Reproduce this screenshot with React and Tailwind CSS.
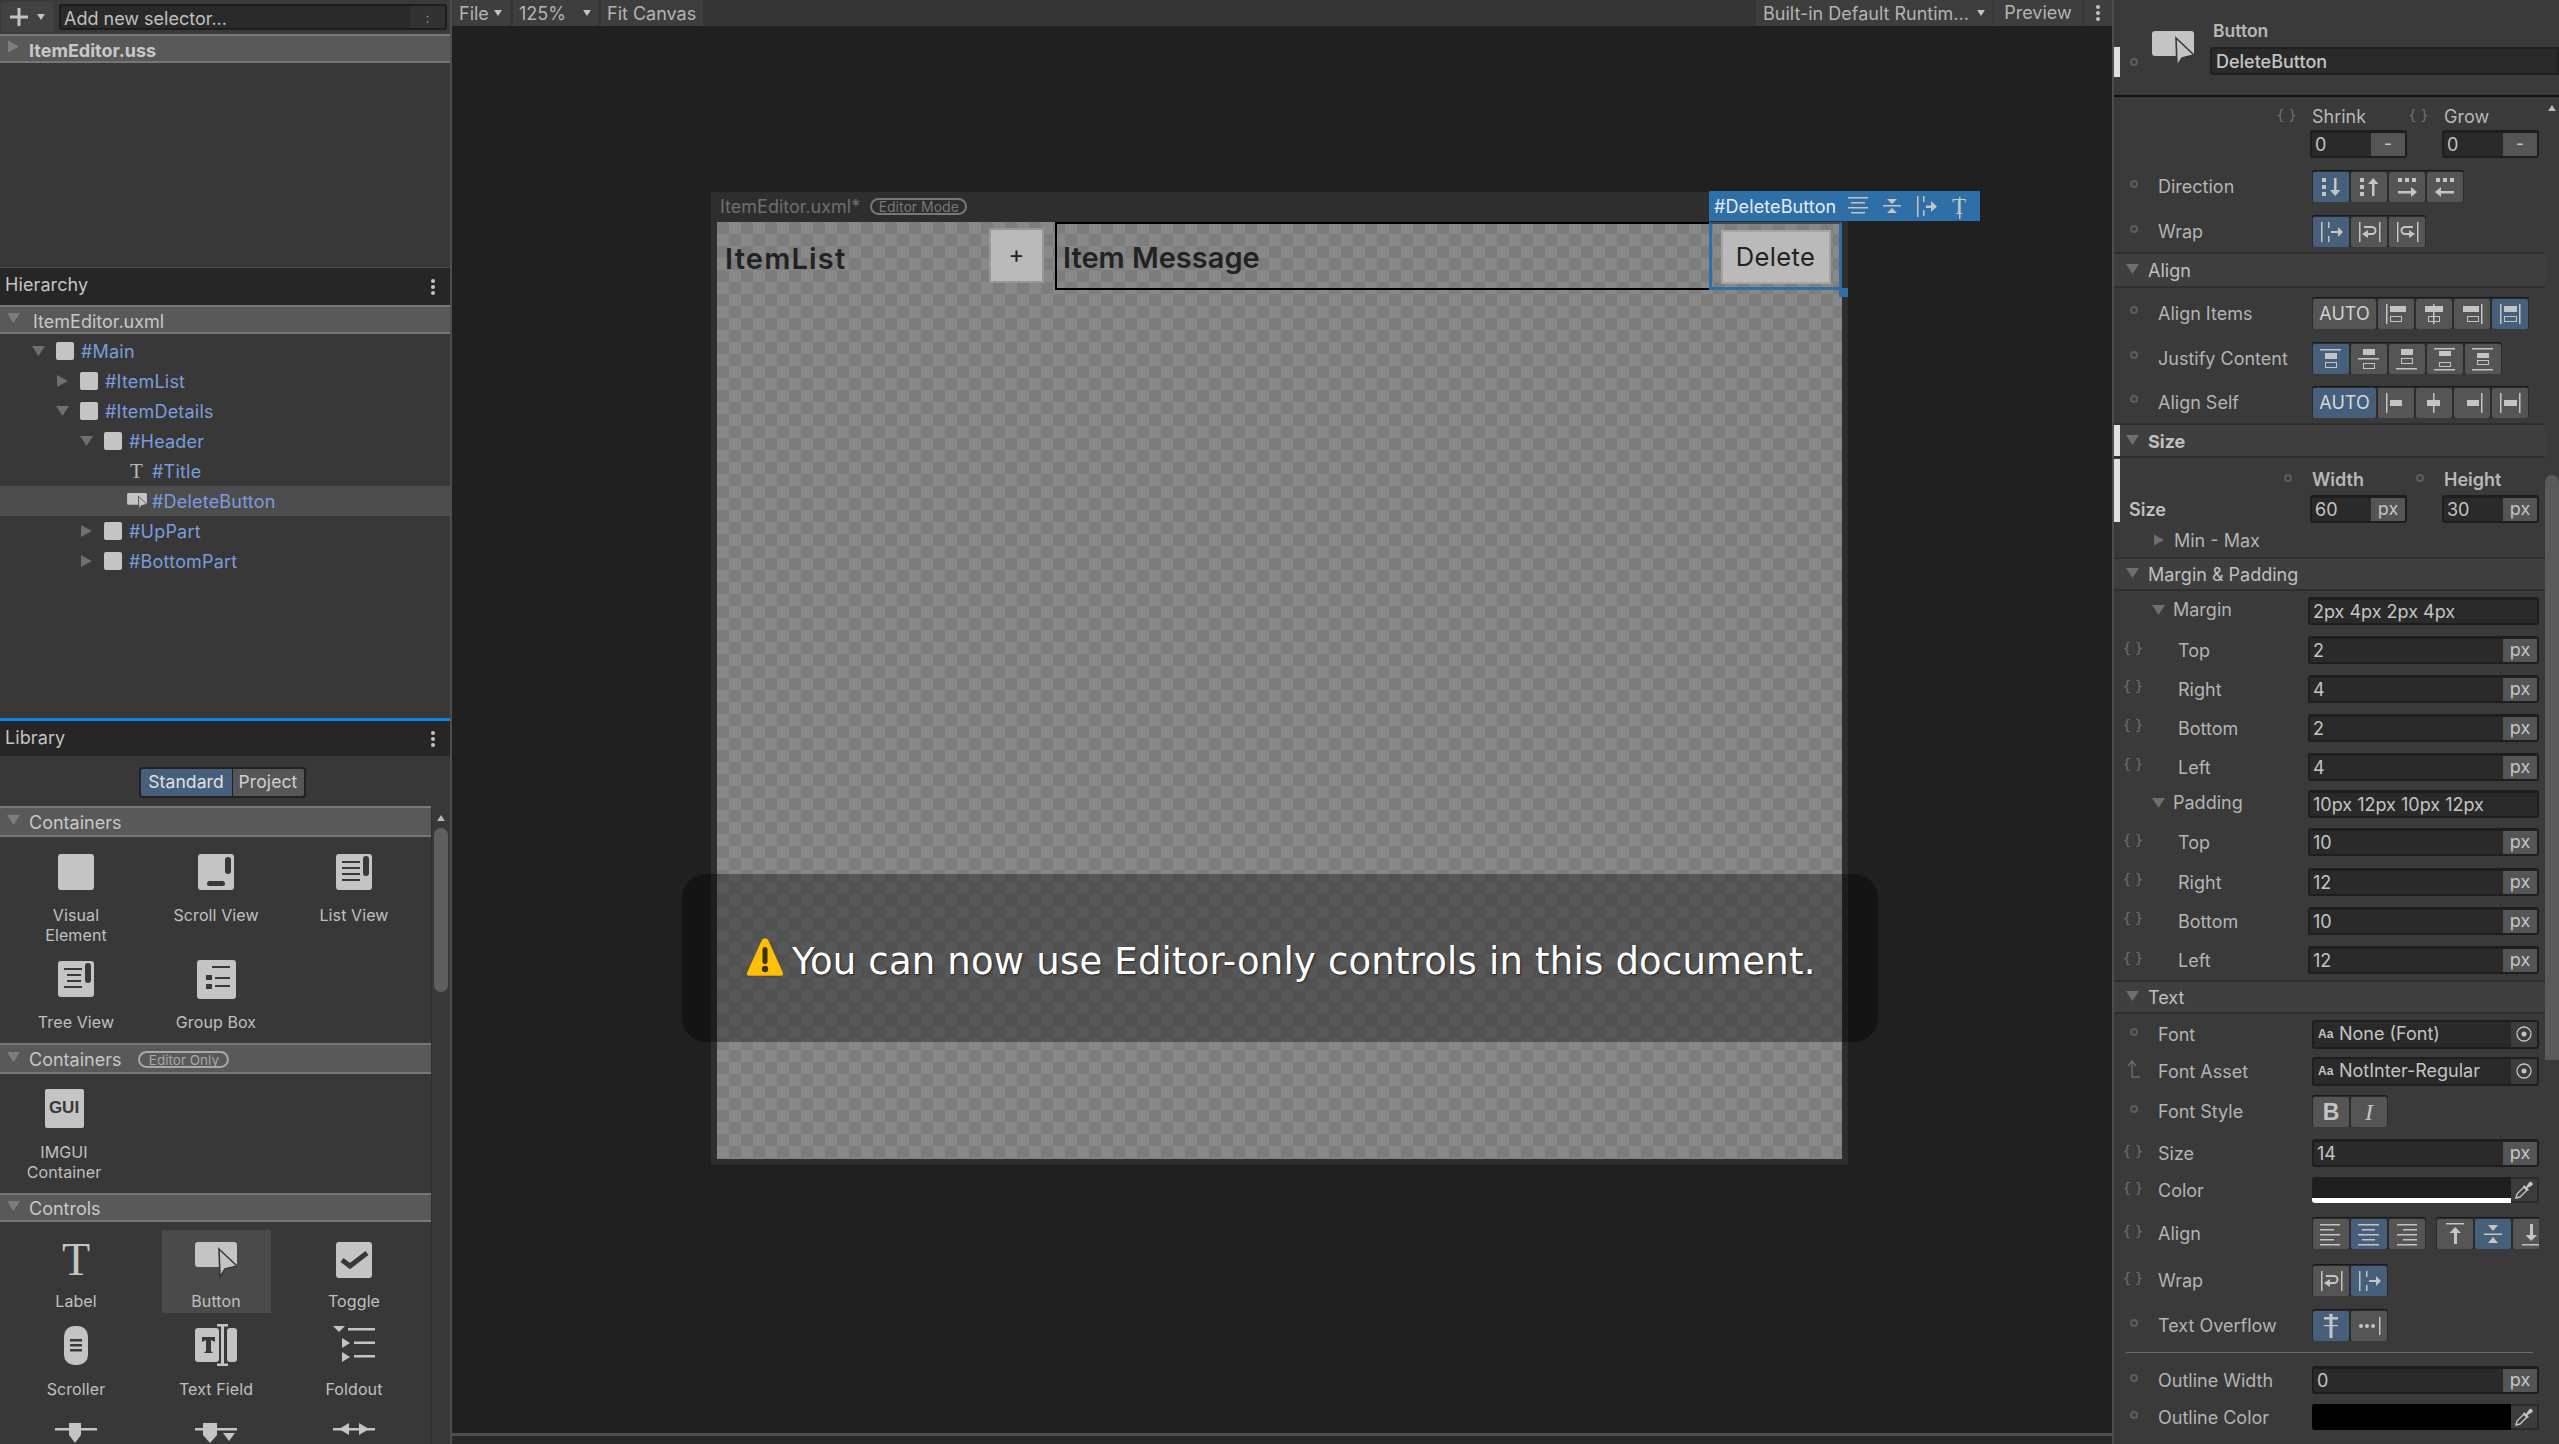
import React from 'react';

const ICON = '#c4c4c4';
const DARK = '#383838';

function Tri({ dir = 'down', className = 'w-[13px] h-[10px]', color = '#6f6f6f' }) {
  const points = dir === 'down' ? '0,0 13,0 6.5,10' : '1,0 12,6 1,12';
  return (
    <svg viewBox={dir === 'down' ? '0 0 13 10' : '0 0 13 12'} className={`${className} shrink-0`}>
      <polygon points={points} fill={color} />
    </svg>
  );
}

function Kebab({ className = '' }) {
  return (
    <svg viewBox="0 0 6 16" className={`w-[6px] h-[16px] shrink-0 ${className}`}>
      <circle cx="3" cy="2" r="2" fill="#c4c4c4" />
      <circle cx="3" cy="8" r="2" fill="#c4c4c4" />
      <circle cx="3" cy="14" r="2" fill="#c4c4c4" />
    </svg>
  );
}

function ButtonIcon({ className }) {
  return (
    <svg viewBox="0 0 42 36" className={className}>
      <rect x="0" y="0" width="42" height="25" rx="3" fill={ICON} />
      <polygon points="24,7 42,24 30,27 25,35" fill={ICON} stroke={DARK} strokeWidth="1.6" />
    </svg>
  );
}

// ---- left panel ----

function SectionBar({ children, bold, arrow = 'down', className = '', textClass = 'pt-[2px]' }) {
  return (
    <div className={`flex items-center border-y-2 border-[#777777] bg-[#595959] ${className}`}>
      <Tri dir={arrow} className={arrow === 'down' ? 'w-[13px] h-[10px] ml-[7px] mb-[3px]' : 'w-[13px] h-[13px] ml-[7px] mb-[4px]'} color="#7d7d7d" />
      <span className={`ml-[9px] text-[18px] leading-[22px] text-[#c8c8c8] ${bold ? 'font-bold' : ''} ${textClass}`}>
        {children}
      </span>
    </div>
  );
}

function TreeRow({ level, open, leaf, name, selected }) {
  const pads = ['pl-[32px]', 'pl-[56px]', 'pl-[80px]', 'pl-[104px]'];
  return (
    <div className={`flex items-center h-[30px] ${pads[level]} ${selected ? 'bg-[#4d4d4d]' : ''}`}>
      <div className="w-[24px] flex justify-start">
        {!leaf && <Tri dir={open ? 'down' : 'right'} className="w-[13px] h-[12px]" />}
      </div>
      {leaf === 'text' && (
        <span className="w-[24px] text-[#b8b8b8] font-['Liberation_Serif'] text-[21px] leading-none pl-[2px]">T</span>
      )}
      {leaf === 'button' && <ButtonIcon className="w-[20px] h-[17px] -ml-[1px] mr-[5px]" />}
      {!leaf && <div className="w-[18px] h-[18px] rounded-[2px] bg-[#c4c4c4] mr-[7px]" />}
      <span className="text-[18px] tracking-[0.2px] text-[#7b9cdf]">{name}</span>
    </div>
  );
}

function LibItem({ icon, label, className = '', labelClass = 'mt-[13px]' }) {
  return (
    <div className={`flex flex-col items-center ${className}`}>
      <div className="h-[40px] flex items-center justify-center">{icon}</div>
      <div className={`text-center text-[16px] leading-[20px] tracking-[0.1px] text-[#c0c0c0] ${labelClass}`}>{label}</div>
    </div>
  );
}

const Dark = ({ x, y, w, h, r = 0 }) => <rect x={x} y={y} width={w} height={h} rx={r} fill={DARK} />;

const VisualIcon = () => <div className="w-[36px] h-[36px] rounded-[3px] bg-[#c4c4c4]" />;

const ScrollIcon = () => (
  <svg viewBox="0 0 36 36" className="w-[36px] h-[36px]">
    <rect width="36" height="36" rx="3" fill={ICON} />
    <Dark x="27" y="3" w="6" h="17" r="3" />
    <Dark x="9" y="27" w="18" h="5" r="2.5" />
  </svg>
);

const ListIcon = ({ tree }) => (
  <svg viewBox="0 0 36 36" className="w-[36px] h-[36px]">
    <rect width="36" height="36" rx="3" fill={ICON} />
    <Dark x="27" y="2" w="6" h="20" r="3" />
    <Dark x="6" y="7" w="18" h="2" />
    <Dark x={tree ? 9 : 6} y="13" w={tree ? 14 : 18} h="2" />
    <Dark x={tree ? 9 : 6} y="19" w={tree ? 14 : 18} h="2" />
    <Dark x="6" y="25" w="18" h="2" />
  </svg>
);

const GroupIcon = () => (
  <svg viewBox="0 0 39 39" className="w-[39px] h-[39px]">
    <rect width="39" height="39" rx="3" fill={ICON} />
    <Dark x="15" y="6" w="18" h="2" />
    <Dark x="9" y="15" w="6" h="5" />
    <Dark x="18" y="17" w="15" h="2" />
    <Dark x="9" y="24" w="6" h="5" />
    <Dark x="18" y="25" w="15" h="2" />
  </svg>
);

const ToggleIcon = () => (
  <svg viewBox="0 0 36 36" className="w-[36px] h-[36px]">
    <rect width="36" height="36" rx="3" fill={ICON} />
    <polyline points="6,18 14,24 31,11" fill="none" stroke={DARK} strokeWidth="5" />
  </svg>
);

const ScrollerIcon = () => (
  <svg viewBox="0 0 24 39" className="w-[24px] h-[39px]">
    <rect width="24" height="39" rx="10" fill={ICON} />
    <Dark x="6" y="13" w="12" h="2.5" />
    <Dark x="6" y="18" w="12" h="2.5" />
    <Dark x="6" y="23" w="12" h="2.5" />
  </svg>
);

const TextFieldIcon = () => (
  <svg viewBox="0 0 42 42" className="w-[42px] h-[42px]">
    <rect x="0" y="4" width="24" height="34" rx="3" fill={ICON} />
    <rect x="32" y="4" width="10" height="34" rx="3" fill={ICON} />
    <polygon points="7,13 20,13 20,18 16,16 16,27 18,29 9,29 11,27 11,16 7,18" fill={DARK} />
    <rect x="26" y="2" width="3" height="38" fill={ICON} />
    <rect x="22" y="0" width="11" height="2.5" fill={ICON} />
    <rect x="22" y="39.5" width="11" height="2.5" fill={ICON} />
  </svg>
);

const FoldoutIcon = () => (
  <svg viewBox="0 0 42 38" className="w-[42px] h-[38px]">
    <polygon points="0,0 12,0 6,6" fill={ICON} />
    <rect x="15" y="2" width="27" height="2.5" fill={ICON} />
    <polygon points="9,12 17,17 9,22" fill={ICON} />
    <rect x="21" y="15.5" width="21" height="2.5" fill={ICON} />
    <polygon points="9,26 17,31 9,36" fill={ICON} />
    <rect x="21" y="29" width="21" height="2.5" fill={ICON} />
  </svg>
);

const SliderA = () => (
  <svg viewBox="0 0 42 20" className="w-[42px] h-[20px]">
    <rect x="0" y="5" width="42" height="2.5" fill={ICON} />
    <polygon points="14,0 26,0 26,12 20,20 14,12" fill={ICON} />
  </svg>
);

const SliderB = () => (
  <svg viewBox="0 0 42 20" className="w-[42px] h-[20px]">
    <rect x="0" y="5" width="42" height="2.5" fill={ICON} />
    <polygon points="8,0 22,0 22,12 15,20 8,12" fill={ICON} />
    <polygon points="28,10 40,10 34,18" fill={ICON} />
  </svg>
);

const MinMaxIcon = () => (
  <svg viewBox="0 0 42 20" className="w-[42px] h-[20px]">
    <rect x="0" y="5" width="42" height="2.5" fill={ICON} />
    <polygon points="6,6 16,0 16,12" fill={ICON} />
    <polygon points="36,6 26,0 26,12" fill={ICON} />
  </svg>
);

function LeftPanel() {
  return (
    <aside className="w-[450px] shrink-0 h-full flex flex-col bg-[#383838] border-r-2 border-[#4e4e4e] box-content">
      <div className="h-[34px] flex items-center bg-[#3a3a3a] pl-[1px]">
        <div className="w-[53px] h-[30px] flex items-center justify-center gap-[8px] bg-[#424242]">
          <svg viewBox="0 0 18 18" className="w-[18px] h-[18px]">
            <rect x="7.5" y="0" width="3" height="18" fill={ICON} />
            <rect x="0" y="7.5" width="18" height="3" fill={ICON} />
          </svg>
          <Tri className="w-[10px] h-[6px]" color={ICON} />
        </div>
        <div className="ml-[5px] w-[388px] h-[26px] flex items-center rounded-[3px] border-2 border-[#1d1d1d] bg-[#2a2a2a]">
          <span className="pl-[3px] pt-[3px] flex-1 text-[18px] leading-[22px] text-[#c0c0c0]">Add new selector...</span>
          <div className="w-[35px] h-full bg-[#323232] flex items-center justify-center text-[#8a8a8a] text-[14px]">:</div>
        </div>
      </div>
      <SectionBar bold className="h-[29px]" arrow="right" textClass="pt-[5px]">ItemEditor.uss</SectionBar>
      <div className="h-[204px]" />
      <div className="h-[38px] flex items-center justify-between bg-[#262626] border-t border-[#4d4d4d] pl-[5px] pr-[14px]">
        <span className="text-[18px] tracking-[0.1px] text-[#c4c4c4] mb-[4px]">Hierarchy</span>
        <Kebab />
      </div>
      <SectionBar className="h-[29px]" textClass="ml-[13px] pt-[5px]">ItemEditor.uxml</SectionBar>
      <div className="pt-[2px]">
        <TreeRow level={0} open name="#Main" />
        <TreeRow level={1} name="#ItemList" />
        <TreeRow level={1} open name="#ItemDetails" />
        <TreeRow level={2} open name="#Header" />
        <TreeRow level={3} leaf="text" name="#Title" />
        <TreeRow level={3} leaf="button" name="#DeleteButton" selected />
        <TreeRow level={2} name="#UpPart" />
        <TreeRow level={2} name="#BottomPart" />
      </div>
      <div className="h-[142px]" />
      <div className="h-[3px] bg-[#0a84e8]" />
      <div className="h-[35px] flex items-center justify-between bg-[#262626] pl-[5px] pr-[14px]">
        <span className="text-[18px] tracking-[0.1px] text-[#c4c4c4] mb-[3px]">Library</span>
        <Kebab />
      </div>
      <div className="h-[50px] flex items-start justify-center pt-[11px]">
        <div className="flex h-[31px] rounded-[3px] border-2 border-[#222222] bg-[#222222] gap-[1px] ml-[-6px]">
          <div className="w-[91px] flex items-center justify-center rounded-l-[2px] bg-[#46607c] text-[17.5px] tracking-[0.1px] text-[#e0e0e0]">Standard</div>
          <div className="w-[71px] flex items-center justify-center rounded-r-[2px] bg-[#565656] text-[17.5px] tracking-[0.1px] text-[#d0d0d0]">Project</div>
        </div>
      </div>
      <div className="flex flex-1 min-h-0">
        <div className="w-[431px] flex flex-col overflow-hidden">
          <SectionBar className="h-[31px] shrink-0">Containers</SectionBar>
          <div className="shrink-0 grid grid-cols-[140px_140px_136px] pl-[6px]">
            <LibItem className="h-[108px] pt-[15px]" icon={<VisualIcon />} label={<>Visual<br />Element</>} />
            <LibItem className="h-[108px] pt-[15px]" icon={<ScrollIcon />} label="Scroll View" />
            <LibItem className="h-[108px] pt-[15px]" icon={<ListIcon />} label="List View" />
            <LibItem className="h-[98px] pt-[14px]" icon={<ListIcon tree />} label="Tree View" />
            <LibItem className="h-[98px] pt-[14px]" icon={<GroupIcon />} label="Group Box" />
          </div>
          <SectionBar className="h-[31px] shrink-0">
            <span className="flex items-center">
              Containers
              <span className="ml-[17px] h-[17px] w-[91px] flex items-center justify-center rounded-full border-2 border-[#a8a8a8] text-[13.5px] text-[#a8a8a8]">Editor Only</span>
            </span>
          </SectionBar>
          <div className="shrink-0 h-[119px] w-[128px]">
            <LibItem
              className="pt-[14px]"
              labelClass="mt-[14px]"
              icon={
                <div className="w-[39px] h-[39px] rounded-[2px] bg-[#c4c4c4] flex items-center justify-center font-[Arial,'Liberation_Sans'] font-black text-[17px] text-[#383838]">GUI</div>
              }
              label={<>IMGUI<br />Container</>}
            />
          </div>
          <SectionBar className="h-[29px] shrink-0">Controls</SectionBar>
          <div className="shrink-0 grid grid-cols-[140px_140px_136px] pl-[6px]">
            <div className="h-[91px] pt-[8px]">
              <LibItem
                className="h-[83px] pt-[10px]"
                labelClass="mt-[11px]"
                icon={<span className="font-['Liberation_Serif'] text-[46px] leading-none text-[#c4c4c4]">T</span>}
                label="Label"
              />
            </div>
            <div className="h-[91px] pt-[8px] flex justify-center">
              <LibItem
                className="h-[83px] pt-[10px] w-[109px] bg-[#4a4a4a]"
                labelClass="mt-[11px]"
                icon={<ButtonIcon className="w-[42px] h-[36px]" />}
                label="Button"
              />
            </div>
            <div className="h-[91px] pt-[8px]">
              <LibItem className="h-[83px] pt-[10px]" labelClass="mt-[11px]" icon={<ToggleIcon />} label="Toggle" />
            </div>
            <LibItem className="h-[110px] pt-[12px]" labelClass="mt-[14px]" icon={<ScrollerIcon />} label="Scroller" />
            <LibItem className="h-[110px] pt-[12px]" labelClass="mt-[14px]" icon={<TextFieldIcon />} label="Text Field" />
            <LibItem className="h-[110px] pt-[12px]" labelClass="mt-[14px]" icon={<FoldoutIcon />} label="Foldout" />
            <div className="flex justify-center"><SliderA /></div>
            <div className="flex justify-center"><SliderB /></div>
            <div className="flex justify-center"><MinMaxIcon /></div>
          </div>
        </div>
        <div className="w-[19px] flex flex-col items-center pt-[9px] border-l border-[#303030]">
          <Tri className="w-[10px] h-[6px] rotate-180" color="#b8b8b8" />
          <div className="mt-[7px] w-[14px] h-[164px] rounded-[7px] bg-[#5f5f5f]" />
        </div>
      </div>
    </aside>
  );
}

// ---- canvas ----

function Toolbar() {
  const btn = 'h-[26px] flex items-center bg-[#3e3e3e] text-[18px] text-[#b4b4b4]';
  return (
    <div className="h-[26px] flex shrink-0 bg-[#353535] pl-[1px]">
      <div className={`${btn} w-[57px] pl-[6px] justify-between pr-[7px]`}>File<Tri className="w-[10px] h-[6px]" color={ICON} /></div>
      <div className={`${btn} w-[85px] ml-[3px] pl-[6px] justify-between pr-[6px]`}>125%<Tri className="w-[10px] h-[6px]" color={ICON} /></div>
      <div className={`${btn} w-[102px] ml-[3px] pl-[6px]`}>Fit Canvas</div>
      <div className="flex-1" />
      <div className={`${btn} w-[237px] pl-[7px] justify-between pr-[7px]`}>Built-in Default Runtim...<Tri className="w-[10px] h-[6px]" color={ICON} /></div>
      <div className={`${btn} w-[88px] ml-[1px] justify-center pb-[2px]`}>Preview</div>
      <div className={`${btn} w-[28px] ml-[2px] justify-center`}><Kebab /></div>
    </div>
  );
}

function TagIcons() {
  const c = '#c4c4c4';
  return (
    <svg viewBox="0 0 130 30" className="w-[130px] h-[30px]">
      <g fill={c}>
        <rect x="6" y="6" width="20" height="1.5" /><rect x="9" y="11" width="14" height="1.5" />
        <rect x="6" y="16" width="20" height="1.5" /><rect x="9" y="21" width="14" height="1.5" />
        <rect x="41" y="14" width="18" height="1.5" />
        <polygon points="45,8 55,8 50,13" /><polygon points="45,22 55,22 50,17" />
        <rect x="75" y="5" width="1.5" height="21" /><rect x="81" y="5" width="1.5" height="6" /><rect x="81" y="19" width="1.5" height="6" />
        <rect x="84" y="14.5" width="7" height="2.5" /><polygon points="89,10 95,15.5 89,21" />
      </g>
      <text x="110" y="23" fontSize="23" fontFamily="Liberation Serif" fill={c}>T</text>
      <rect x="117" y="6" width="1.5" height="22" fill={c} />
    </svg>
  );
}

function CanvasFrame() {
  return (
    <div className="relative ml-[259px] mt-[166px] w-[1137px] h-[973px] bg-[#2e2e2e]">
      <div className="h-[30px] flex items-center pl-[9px] pb-[1px]">
        <span className="text-[18px] text-[#6e6e6e]">ItemEditor.uxml*</span>
        <span className="ml-[10px] h-[17px] w-[97px] flex items-center justify-center rounded-full border-2 border-[#787878] text-[14px] text-[#787878]">Editor Mode</span>
      </div>
      <div className="ml-[6px] mr-[6px] w-[1125px] h-[937px] bg-[conic-gradient(#888888_25%,#7d7d7d_0_50%,#888888_0_75%,#7d7d7d_0)] bg-[length:24px_24px] font-[Inter]">
        <div className="flex h-[68px]">
          <div className="w-[338px] flex items-center pl-[8px] shrink-0">
            <span className="flex-1 pt-[5px] text-[29px] font-semibold tracking-[1.2px] text-[#222222]">ItemList</span>
            <div className="mr-[11px] w-[55px] h-[55px] mb-[2px] flex items-center justify-center bg-[#bababa] border-[2px] border-[#969696] text-[24px] text-[#222222]">+</div>
          </div>
          <div className="w-[654px] border-y-2 border-l-2 border-black flex items-center pl-[6px]">
            <span className="pt-[3px] text-[29px] font-semibold text-[#222222]">Item Message</span>
          </div>
          <div className="relative w-[133px] border-x-[3px] border-b-[3px] border-[#2e6fa7] border-t-2 border-t-[#3a4b5a] flex items-center justify-center">
            <div className="mt-[3px] w-[110px] h-[54px] flex items-center justify-center bg-[#bababa] border-[2px] border-[#a4a4a4] text-[25.5px] tracking-[0.4px] text-[#222222]">Delete</div>
            <div className="absolute -right-[9px] -bottom-[10px] w-[9px] h-[9px] bg-[#2e6fa7]" />
          </div>
        </div>
      </div>
      <div className="absolute left-[998px] top-[-1px] w-[271px] h-[30px] flex items-center bg-[#2e6fa7]">
        <span className="w-[133px] shrink-0 pl-[5px] text-[18px] tracking-[0.1px] text-[#e4ecf4]">#DeleteButton</span>
        <TagIcons />
      </div>
    </div>
  );
}

function Toast() {
  return (
    <div className="absolute left-[682px] top-[874px] w-[1196px] h-[168px] flex items-center rounded-[24px] bg-black/35 pl-[63px]">
      <svg viewBox="0 0 40 42" className="w-[40px] h-[42px] shrink-0 mb-[2px]">
        <path d="M20 2 C22 2 23 3 24 5 L38 36 C39 39 38 40 35 40 L5 40 C2 40 1 39 2 36 L16 5 C17 3 18 2 20 2 Z" fill="#ffbf07" stroke="#333333" strokeOpacity="0.5" strokeWidth="1" />
        <rect x="17.5" y="11" width="5" height="17" rx="2.5" fill="#3c3306" />
        <circle cx="20" cy="33" r="3.2" fill="#3c3306" />
      </svg>
      <span className="ml-[7px] mt-[7px] font-['DejaVu_Sans'] text-[37px] leading-none tracking-[0.2px] text-white [text-shadow:1px_1px_2px_#222222] whitespace-nowrap">
        You can now use Editor-only controls in this document.
      </span>
    </div>
  );
}

// ---- inspector ----

function Bind({ kind = 'dot' }) {
  return (
    <div className="w-[40px] shrink-0 flex justify-center mb-[5px]">
      {kind === 'dot' && <div className="w-[8px] h-[8px] rounded-full border-2 border-[#5e5e5e]" />}
      {kind === 'var' && <span className="font-['DejaVu_Sans'] text-[14px] leading-none tracking-[3px] text-[#707070] pl-[1px]">{'{}'}</span>}
      {kind === 'up' && (
        <svg viewBox="0 0 14 18" className="w-[14px] h-[18px]">
          <path d="M5 17 V2 M1 6 L5 1 L9 6 M5 17 H13" stroke="#6c6c6c" strokeWidth="1.4" fill="none" />
        </svg>
      )}
    </div>
  );
}

function Field({ value, unit, className = 'w-[231px]', inputClass = '' }) {
  return (
    <div className={`flex h-[28px] rounded-[3px] border-2 border-t-[3px] border-[#1e1e1e] bg-[#2a2a2a] overflow-hidden ${className}`}>
      <span className={`flex-1 pl-[3px] text-[18px] leading-[24px] text-[#c4c4c4] ${inputClass}`}>{value}</span>
      {unit && <span className="w-[34px] bg-[#555555] text-center text-[18px] leading-[21px] text-[#c4c4c4]">{unit}</span>}
    </div>
  );
}

function Row({ h, bind, label, indent, children }) {
  return (
    <div className={`flex items-center ${h}`}>
      <Bind kind={bind} />
      <span className={`shrink-0 pt-[1px] text-[18px] text-[#b4b4b4] ${indent ? 'w-[154px] pl-[24px]' : 'w-[158px] pl-[4px]'}`}>
        {label}
      </span>
      {children}
    </div>
  );
}

function Header({ children, h = 'h-[36px]', bold, mark }) {
  return (
    <div className={`relative flex items-center ${h} shrink-0 border-y-2 border-[#2f2f2f] bg-[#3f3f3f] pl-[12px]`}>
      {mark && <div className="absolute left-0 top-0 bottom-0 w-[6px] bg-[#e0e0e0]" />}
      <Tri className="w-[13px] h-[10px] mb-[2px]" />
      <span className={`ml-[9px] pt-[1px] text-[18px] text-[#c0c0c0] ${bold ? 'font-bold' : ''}`}>{children}</span>
    </div>
  );
}

function Group({ children, className = '' }) {
  return <div className={`flex gap-[2px] h-[32px] p-[1px] rounded-[3px] bg-[#2c2c2c] border-t border-[#191919] ${className}`}>{children}</div>;
}

function Seg({ on, children, wide }) {
  return (
    <div className={`h-[30px] shrink-0 flex items-center justify-center overflow-hidden rounded-[2px] ${wide ? 'w-[63px]' : 'w-[36px]'} ${on ? 'bg-[#46607c]' : 'bg-[#555555]'}`}>
      {children}
    </div>
  );
}

const SegIcon = ({ children }) => (
  <svg viewBox="0 0 36 30" className="w-[36px] h-[30px]" fill={ICON} stroke="none">
    {children}
  </svg>
);

const Bar = (x, y, w, h) => <rect x={x} y={y} width={w} height={h} />;

const dirDown = (
  <SegIcon>
    {Bar(9, 6, 4, 4)}{Bar(9, 13, 4, 4)}{Bar(9, 20, 4, 4)}
    {Bar(21, 6, 2.5, 14)}<polygon points="17,18 27.5,18 22.2,24" />
  </SegIcon>
);
const dirUp = (
  <SegIcon>
    {Bar(9, 6, 4, 4)}{Bar(9, 13, 4, 4)}{Bar(9, 20, 4, 4)}
    {Bar(21, 10, 2.5, 14)}<polygon points="17,12 27.5,12 22.2,6" />
  </SegIcon>
);
const dirRight = (
  <SegIcon>
    {Bar(9, 6, 4, 4)}{Bar(16, 6, 4, 4)}{Bar(23, 6, 4, 4)}
    {Bar(9, 19, 14, 2.5)}<polygon points="22,15 28,20 22,25" />
  </SegIcon>
);
const dirLeft = (
  <SegIcon>
    {Bar(9, 6, 4, 4)}{Bar(16, 6, 4, 4)}{Bar(23, 6, 4, 4)}
    {Bar(13, 19, 14, 2.5)}<polygon points="14,15 8,20 14,25" />
  </SegIcon>
);
const noWrap = (
  <SegIcon>
    {Bar(8, 5, 1.5, 20)}{Bar(15, 5, 1.5, 6)}{Bar(15, 19, 1.5, 6)}
    {Bar(18, 14, 9, 2)}<polygon points="25,10 30,15 25,20" />
  </SegIcon>
);
const wrapBack = (
  <SegIcon>
    {Bar(8, 5, 1.5, 20)}{Bar(28, 5, 1.5, 20)}
    <path d="M17 18 H21 a4 4 0 0 0 0 -9 H13 V11 H21 a2 2 0 0 1 0 5 H17 V13 L11 17 L17 21 Z" />
  </SegIcon>
);
const wrapRev = (
  <SegIcon>
    {Bar(8, 5, 1.5, 20)}{Bar(28, 5, 1.5, 20)}
    <path d="M20 18 H16 a4 4 0 0 1 0 -9 H24 V11 H16 a2 2 0 0 0 0 5 H20 V13 L26 17 L20 21 Z" />
  </SegIcon>
);

const Hollow = ({ x, y, w, h }) => <rect x={x + 0.5} y={y + 0.5} width={w - 1} height={h - 1} fill="none" stroke={ICON} />;

const alignStart = (
  <SegIcon>{Bar(8, 5, 1.5, 20)}{Bar(12, 7, 16, 6)}<Hollow x={12} y={17} w={12} h={6} /></SegIcon>
);
const alignCenter = (
  <SegIcon>{Bar(17, 5, 1.5, 20)}{Bar(9, 7, 18, 6)}<Hollow x={12} y={17} w={12} h={6} /></SegIcon>
);
const alignEnd = (
  <SegIcon>{Bar(27, 5, 1.5, 20)}{Bar(9, 7, 16, 6)}<Hollow x={13} y={17} w={12} h={6} /></SegIcon>
);
const alignStretch = (
  <SegIcon>{Bar(8, 5, 1.5, 20)}{Bar(27, 5, 1.5, 20)}{Bar(12, 7, 13, 6)}<Hollow x={12} y={17} w={13} h={6} /></SegIcon>
);
const justStart = (
  <SegIcon>{Bar(7, 5, 21, 1.5)}{Bar(12, 9, 12, 6)}<Hollow x={12} y={18} w={12} h={6} /></SegIcon>
);
const justCenter = (
  <SegIcon>{Bar(7, 14, 21, 1.5)}{Bar(12, 5, 12, 6)}<Hollow x={12} y={19} w={12} h={6} /></SegIcon>
);
const justEnd = (
  <SegIcon>{Bar(7, 24, 21, 1.5)}{Bar(12, 5, 12, 6)}<Hollow x={12} y={14} w={12} h={6} /></SegIcon>
);
const justBetween = (
  <SegIcon>{Bar(7, 4, 21, 1.5)}{Bar(7, 25, 21, 1.5)}{Bar(12, 7, 12, 5)}<Hollow x={12} y={18} w={12} h={5} /></SegIcon>
);
const justAround = (
  <SegIcon>{Bar(7, 4, 21, 1.5)}{Bar(7, 25, 21, 1.5)}{Bar(12, 9, 12, 5)}<Hollow x={12} y={16} w={12} h={5} /></SegIcon>
);
const selfStart = <SegIcon>{Bar(8, 5, 1.5, 20)}{Bar(12, 12, 12, 6)}</SegIcon>;
const selfCenter = <SegIcon>{Bar(17, 5, 1.5, 20)}{Bar(11, 12, 13, 6)}</SegIcon>;
const selfEnd = <SegIcon>{Bar(27, 5, 1.5, 20)}{Bar(13, 12, 12, 6)}</SegIcon>;
const selfStretch = <SegIcon>{Bar(8, 5, 1.5, 20)}{Bar(27, 5, 1.5, 20)}{Bar(12, 12, 13, 6)}</SegIcon>;

const textLeft = <SegIcon>{Bar(7, 5, 20, 1.5)}{Bar(7, 10, 14, 1.5)}{Bar(7, 15, 20, 1.5)}{Bar(7, 20, 14, 1.5)}{Bar(7, 25, 20, 1.5)}</SegIcon>;
const textCenter = <SegIcon>{Bar(7, 5, 21, 1.5)}{Bar(11, 10, 13, 1.5)}{Bar(7, 15, 21, 1.5)}{Bar(11, 20, 13, 1.5)}{Bar(7, 25, 21, 1.5)}</SegIcon>;
const textRight = <SegIcon>{Bar(8, 5, 20, 1.5)}{Bar(14, 10, 14, 1.5)}{Bar(8, 15, 20, 1.5)}{Bar(14, 20, 14, 1.5)}{Bar(8, 25, 20, 1.5)}</SegIcon>;
const vTop = <SegIcon>{Bar(9, 4, 18, 1.5)}{Bar(17, 13, 3, 12)}<polygon points="12.5,14 24,14 18.2,8" /></SegIcon>;
const vMid = <SegIcon>{Bar(9, 14.5, 18, 1.5)}<polygon points="13,6 23,6 18,12" /><polygon points="13,24 23,24 18,18" /></SegIcon>;
const vBot = <SegIcon>{Bar(9, 25, 18, 1.5)}{Bar(17, 5, 3, 12)}<polygon points="12.5,16 24,16 18.2,22" /></SegIcon>;
const clipIcon = (
  <SegIcon>
    {Bar(11, 6, 14, 2.5)}{Bar(16.5, 3, 3, 24)}
    <polygon points="16,3 20,3 18,7" />
    {Bar(11, 14, 14, 1.2)}
  </SegIcon>
);
const ellipsisIcon = (
  <SegIcon>
    <circle cx="10" cy="15" r="2" /><circle cx="16" cy="15" r="2" /><circle cx="22" cy="15" r="2" />
    {Bar(28, 6, 1.5, 18)}
  </SegIcon>
);

function ObjectField({ value }) {
  return (
    <div className="w-[227px] h-[29px] flex rounded-[3px] border-2 border-[#1e1e1e] bg-[#2a2a2a] overflow-hidden">
      <span className="pl-[4px] flex items-center font-[Arial,'Liberation_Sans'] font-bold text-[12px] text-[#c4c4c4] w-[25px]">Aa</span>
      <span className="flex-1 text-[18px] leading-[23px] text-[#c4c4c4]">{value}</span>
      <div className="w-[26px] flex items-center justify-center bg-[#3c3c3c]">
        <svg viewBox="0 0 16 16" className="w-[16px] h-[16px]">
          <circle cx="8" cy="8" r="7" fill="none" stroke={ICON} strokeWidth="1.3" />
          <circle cx="8" cy="8" r="2.5" fill={ICON} />
        </svg>
      </div>
    </div>
  );
}

function ColorField({ fill, line }) {
  return (
    <div className="w-[227px] h-[26px] flex rounded-[3px] bg-[#2a2a2a] overflow-hidden">
      <div className={`flex-1 ${fill} ${line ? 'border-b-[5px] border-white' : ''}`} />
      <div className="w-[28px] flex items-center justify-center bg-[#3c3c3c] border-y-2 border-r-2 border-[#2a2a2a]">
        <svg viewBox="0 0 18 18" className="w-[18px] h-[18px]">
          <path d="M1 17 L2 13 L9 6 L12 9 L5 16 Z" fill="none" stroke={ICON} strokeWidth="1.4" />
          <path d="M9 4 L11 6 L14 1.5 a1.5 1.5 0 0 1 3 3 L12.5 7 L14 9 L12 10 L8 6 Z" fill={ICON} />
        </svg>
      </div>
    </div>
  );
}

function SizeHead({ text, x, bold, kind = 'dot' }) {
  return (
    <div className={`flex items-center ${x}`}>
      <div className="w-[10px] flex justify-center mb-[3px]">
        {kind === 'dot'
          ? <div className="w-[8px] h-[8px] rounded-full border-2 border-[#5e5e5e]" />
          : <span className="font-['DejaVu_Sans'] text-[14px] leading-none tracking-[3px] text-[#707070]">{'{}'}</span>}
      </div>
      <span className={`ml-[19px] text-[18px] text-[#b8b8b8] ${bold ? 'font-semibold' : ''}`}>{text}</span>
    </div>
  );
}

function Inspector() {
  return (
    <aside className="w-[447px] shrink-0 h-full flex flex-col bg-[#3a3a3a] border-l-2 border-[#4e4e4e] overflow-hidden">
      <div className="relative h-[97px] shrink-0 border-b-2 border-[#111111] flex items-start">
        <div className="absolute left-0 top-[47px] w-[6px] h-[30px] bg-[#e0e0e0]" />
        <div className="absolute left-[16px] top-[58px] w-[8px] h-[8px] rounded-full border-2 border-[#5e5e5e]" />
        <ButtonIcon className="ml-[38px] mt-[31px] w-[42px] h-[36px]" />
        <div className="ml-[16px] mt-[18px] flex-1">
          <div className="h-[24px] pl-[3px] text-[17.5px] font-semibold text-[#b8b8b8]">Button</div>
          <div className="mt-[5px] h-[28px] pl-[4px] rounded-l-[3px] border-2 border-[#202020] bg-[#2a2a2a] text-[18px] font-medium leading-[25px] text-[#c4c4c4]">DeleteButton</div>
        </div>
      </div>
      <div className="flex flex-1 min-h-0">
        <div className="w-[431px] shrink-0 flex flex-col overflow-hidden">
          <div className="shrink-0 relative">
            <div className="h-[33px] flex pt-[6px]">
              <SizeHead text="Shrink" kind="var" x="ml-[169px] w-[132px]" />
              <SizeHead text="Grow" kind="var" x="" />
            </div>
            <div className="h-[28px] flex pl-[196px] gap-[35px]">
              <Field value="0" unit="-" className="w-[97px]" />
              <Field value="0" unit="-" className="w-[97px]" />
            </div>
            <Row h="h-[56px]" label="Direction">
              <Group><Seg on>{dirDown}</Seg><Seg>{dirUp}</Seg><Seg>{dirRight}</Seg><Seg>{dirLeft}</Seg></Group>
            </Row>
            <Row h="h-[34px]" label="Wrap">
              <Group><Seg on>{noWrap}</Seg><Seg>{wrapBack}</Seg><Seg>{wrapRev}</Seg></Group>
            </Row>
            <div className="h-[4px]" />
          </div>
          <Header>Align</Header>
          <div className="pt-[2px] shrink-0">
            <Row h="h-[45px]" label="Align Items">
              <Group>
                <Seg wide><span className="text-[18px] text-[#d0d0d0]">AUTO</span></Seg>
                <Seg>{alignStart}</Seg><Seg>{alignCenter}</Seg><Seg>{alignEnd}</Seg><Seg on>{alignStretch}</Seg>
              </Group>
            </Row>
            <Row h="h-[45px]" label="Justify Content">
              <Group><Seg on>{justStart}</Seg><Seg>{justCenter}</Seg><Seg>{justEnd}</Seg><Seg>{justBetween}</Seg><Seg>{justAround}</Seg></Group>
            </Row>
            <Row h="h-[43px]" label="Align Self">
              <Group>
                <Seg wide on><span className="text-[18px] text-[#d8d8d8]">AUTO</span></Seg>
                <Seg>{selfStart}</Seg><Seg>{selfCenter}</Seg><Seg>{selfEnd}</Seg><Seg>{selfStretch}</Seg>
              </Group>
            </Row>
          </div>
          <Header bold mark h="h-[35px]">Size</Header>
          <div className="relative shrink-0">
            <div className="absolute left-0 top-[1px] bottom-[35px] w-[6px] bg-[#e0e0e0]" />
            <div className="h-[37px] flex pt-[6px]">
              <SizeHead bold text="Width" x="ml-[169px] w-[132px]" />
              <SizeHead bold text="Height" x="" />
            </div>
            <div className="h-[28px] flex">
              <span className="w-[196px] pl-[15px] text-[18px] font-semibold leading-[30px] text-[#c0c0c0]">Size</span>
              <div className="flex gap-[35px]">
                <Field value="60" unit="px" className="w-[97px]" />
                <Field value="30" unit="px" className="w-[97px]" />
              </div>
            </div>
            <div className="h-[34px] flex items-center pl-[39px]">
              <Tri dir="right" className="w-[12px] h-[12px]" />
              <span className="ml-[9px] text-[18px] text-[#b4b4b4]">Min - Max</span>
            </div>
          </div>
          <Header h="h-[34px]">Margin &amp; Padding</Header>
          <div className="shrink-0">
            <div className="h-[40px] flex items-center pl-[38px]">
              <Tri className="w-[13px] h-[10px] mb-[3px]" />
              <span className="ml-[8px] mb-[3px] w-[135px] text-[18px] text-[#b4b4b4]">Margin</span>
              <Field value="2px 4px 2px 4px" />
            </div>
            <Row h="h-[38px]" bind="var" indent label="Top"><Field value="2" unit="px" /></Row>
            <Row h="h-[39px]" bind="var" indent label="Right"><Field value="4" unit="px" /></Row>
            <Row h="h-[39px]" bind="var" indent label="Bottom"><Field value="2" unit="px" /></Row>
            <Row h="h-[39px]" bind="var" indent label="Left"><Field value="4" unit="px" /></Row>
            <div className="h-[36px] flex items-center pl-[38px]">
              <Tri className="w-[13px] h-[10px] mb-[3px]" />
              <span className="ml-[8px] mb-[3px] w-[135px] text-[18px] text-[#b4b4b4]">Padding</span>
              <Field value="10px 12px 10px 12px" />
            </div>
            <Row h="h-[40px]" bind="var" indent label="Top"><Field value="10" unit="px" /></Row>
            <Row h="h-[39px]" bind="var" indent label="Right"><Field value="12" unit="px" /></Row>
            <Row h="h-[39px]" bind="var" indent label="Bottom"><Field value="10" unit="px" /></Row>
            <Row h="h-[40px]" bind="var" indent label="Left"><Field value="12" unit="px" /></Row>
          </div>
          <Header h="h-[34px]">Text</Header>
          <div className="shrink-0">
            <Row h="h-[40px]" label="Font"><ObjectField value="None (Font)" /></Row>
            <Row h="h-[34px]" bind="up" label="Font Asset"><ObjectField value="NotInter-Regular" /></Row>
            <Row h="h-[46px]" label="Font Style">
              <Group>
                <Seg><span className="font-[Arial,'Liberation_Sans'] font-bold text-[23px] text-[#c4c4c4]">B</span></Seg>
                <Seg><span className="font-['Liberation_Serif'] italic text-[24px] text-[#c4c4c4]">I</span></Seg>
              </Group>
            </Row>
            <Row h="h-[38px]" bind="var" label="Size"><Field value="14" unit="px" className="w-[227px]" /></Row>
            <Row h="h-[36px]" bind="var" label="Color"><ColorField fill="bg-[#1e1e1e]" line /></Row>
            <Row h="h-[50px]" bind="var" label="Align">
              <Group><Seg>{textLeft}</Seg><Seg on>{textCenter}</Seg><Seg>{textRight}</Seg></Group>
              <Group className="ml-[10px] w-[103px] overflow-hidden rounded-r-none shrink-0">
                <Seg>{vTop}</Seg><Seg on>{vMid}</Seg><Seg>{vBot}</Seg>
              </Group>
            </Row>
            <Row h="h-[44px]" bind="var" label="Wrap">
              <Group><Seg>{wrapBack}</Seg><Seg on>{noWrap}</Seg></Group>
            </Row>
            <Row h="h-[46px]" label="Text Overflow">
              <Group><Seg on>{clipIcon}</Seg><Seg>{ellipsisIcon}</Seg></Group>
            </Row>
            <div className="h-[8px] flex items-center pl-[12px]"><div className="w-[407px] h-px bg-[#6c6c6c]" /></div>
            <Row h="h-[48px]" label="Outline Width"><Field value="0" unit="px" className="w-[227px]" /></Row>
            <Row h="h-[26px]" label="Outline Color"><ColorField fill="bg-black" /></Row>
          </div>
        </div>
        <div className="w-[14px] shrink-0 relative flex flex-col items-center pt-[8px] bg-[#3a3a3a]">
          <Tri className="w-[10px] h-[6px] rotate-180" color="#b8b8b8" />
          <div className="absolute left-0 top-[378px] w-[14px] h-[585px] rounded-t-[7px] bg-[#5a5a5a]" />
        </div>
      </div>
    </aside>
  );
}

export default function App() {
  return (
    <div className="relative flex w-[2559px] h-[1444px] overflow-hidden bg-[#202020] font-[Inter]">
      <LeftPanel />
      <main className="w-[1660px] shrink-0 h-full flex flex-col bg-[#202020]">
        <Toolbar />
        <div className="flex-1 min-h-0">
          <CanvasFrame />
        </div>
        <div className="h-[11px] shrink-0 border-t-[3px] border-[#4e4e4e] bg-[#282828]" />
      </main>
      <Inspector />
      <Toast />
    </div>
  );
}
